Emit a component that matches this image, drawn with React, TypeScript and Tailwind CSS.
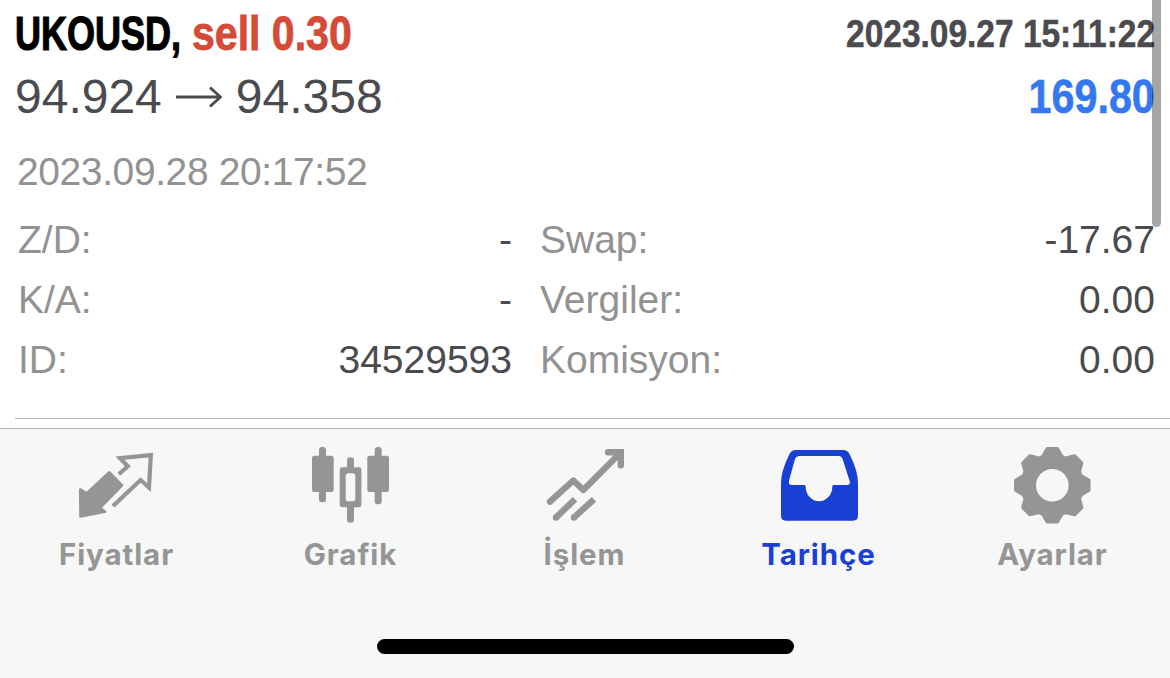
import type { ReactNode } from "react";
import clsx from "clsx";

const details = [
  { label: "Z/D:", value: "-", label2: "Swap:", value2: "-17.67" },
  { label: "K/A:", value: "-", label2: "Vergiler:", value2: "0.00" },
  { label: "ID:", value: "34529593", label2: "Komisyon:", value2: "0.00" },
];

function QuotesIcon() {
  return (
    <>
      <path
        d="M8.2 49.5 14.8 53.3 37.4 32.3 50 45.3 28.3 67.7 33 71.8 8.5 76.5Z"
        fill="currentColor"
        stroke="currentColor"
        strokeWidth="2.6"
        strokeLinejoin="round"
      />
      <path
        d="M46.8 34.3 55.8 26.2 48 18.2 78.8 15.2 77 47.5 68.6 40 41 66"
        fill="none"
        stroke="currentColor"
        strokeWidth="4.2"
      />
    </>
  );
}

function ChartIcon() {
  return (
    <g fill="currentColor">
      <rect x="13" y="7" width="7" height="55.3" rx="3" />
      <rect x="6" y="15.7" width="21.7" height="36.3" rx="2.5" />
      <rect x="41" y="17.3" width="7" height="20" rx="3" />
      <rect x="41" y="60" width="7" height="22.7" rx="3" />
      <rect x="33.7" y="27.3" width="21.7" height="40" rx="2.5" />
      <rect x="39.7" y="33.3" width="9.6" height="28" rx="2.5" fill="#f7f7f7" />
      <rect x="68.7" y="7" width="7" height="57.3" rx="3" />
      <rect x="61.3" y="15.7" width="21.7" height="36.3" rx="2.5" />
    </g>
  );
}

function TradeIcon() {
  return (
    <g fill="none" stroke="currentColor" strokeWidth="6.4">
      <path d="M10 61.7 33.3 40.5 43.3 50 80 13.3" strokeLinecap="round" strokeLinejoin="round" />
      <path d="M68 12.3H80.8V25.2" strokeLinecap="round" />
      <path d="M16 77.5 35 59.3M34 77.5 54 59.3" />
      <path d="M16 77.5h.01M34 77.5h.01" strokeLinecap="round" />
    </g>
  );
}

function HistoryIcon() {
  return (
    <path
      fillRule="evenodd"
      fill="currentColor"
      d="M22 10H69Q73.5 10 75.5 14Q84 31 84 43V75.5Q84 80.7 79 80.7H12Q7 80.7 7 75.5V43Q7 31 15.5 14Q17.5 10 22 10ZM25.5 16Q22.3 16 21 19L15.2 40Q14 45 17.5 45H30.5Q31.7 45 31.7 47A13.3 14.3 0 0 0 58.3 47Q58.3 45 59.5 45H73Q77 45 75.5 40.5L68.6 19Q67.5 16 64.5 16Z"
    />
  );
}

// [angle from the tooth centre, radius]
const tooth = [
  [-17.5, 31.2],
  [-12, 34.5],
  [-8, 37.3],
  [8, 37.3],
  [12, 34.5],
  [17.5, 31.2],
  [22.5, 30.4],
];

const gearPoints = Array.from({ length: 8 }, (_, i) =>
  tooth.map(([angle, r]) => {
    const a = ((i * 45 + angle) * Math.PI) / 180;
    return `${(44.3 + r * Math.sin(a)).toFixed(2)},${(45.3 - r * Math.cos(a)).toFixed(2)}`;
  }).join(" ")
).join(" ");

function SettingsIcon() {
  return (
    <>
      <polygon
        points={gearPoints}
        fill="currentColor"
        stroke="currentColor"
        strokeWidth="2.6"
        strokeLinejoin="round"
      />
      <circle cx="44.3" cy="45.3" r="16.3" fill="#f7f7f7" />
    </>
  );
}

const tabs: { label: string; icon: ReactNode; active?: boolean }[] = [
  { label: "Fiyatlar", icon: <QuotesIcon /> },
  { label: "Grafik", icon: <ChartIcon /> },
  { label: "İşlem", icon: <TradeIcon /> },
  { label: "Tarihçe", icon: <HistoryIcon />, active: true },
  { label: "Ayarlar", icon: <SettingsIcon /> },
];

export default function App() {
  return (
    <div className="relative flex h-[678px] w-[1170px] flex-col overflow-hidden bg-white font-['Liberation_Sans',sans-serif] text-[39px] leading-none text-[#4a4a4f]">
      <main className="h-[428px] pl-[15px]">
        <div className="flex h-[66px] items-center justify-between pr-[15px] font-bold">
          <div className="flex pt-[2px] text-[48px]">
            <span className="w-[177px] origin-left scale-x-[0.75] whitespace-nowrap text-black [-webkit-text-stroke:1.2px_#000]">
              UKOUSD,
            </span>
            <span className="origin-left scale-x-[0.855] whitespace-nowrap text-[#d54b37] [-webkit-text-stroke:0.8px_#d54b37]">
              sell 0.30
            </span>
          </div>
          <span className="origin-right scale-x-[0.858] whitespace-nowrap [-webkit-text-stroke:0.5px_#4a4a4f]">
            2023.09.27 15:11:22
          </span>
        </div>
        <div className="flex h-[61px] items-center justify-between pr-[15px] text-[48px]">
          <div className="flex items-center">
            <span>94.924</span>
            <svg className="mx-[14px] h-6 w-[46px]" viewBox="0 0 46 24" fill="none" stroke="currentColor" strokeWidth="2.8">
              <path d="M0 12H44.5M34 2.5 44.5 12 34 21.5" />
            </svg>
            <span>94.358</span>
          </div>
          <span className="origin-right scale-x-[0.86] font-bold text-[#3478f0] [-webkit-text-stroke:0.6px_#3478f0]">
            169.80
          </span>
        </div>
        <div className="flex h-[82px] items-center pt-[7px] pl-[2px] tracking-[-0.4px] text-[#929292]">
          2023.09.28 20:17:52
        </div>
        <div>
          {details.map((row) => (
            <div key={row.label} className="flex h-[60px] items-center pr-[15px]">
              <div className="flex w-[497px] justify-between pl-[3px]">
                <span className="text-[#929292]">{row.label}</span>
                <span>{row.value}</span>
              </div>
              <div className="flex flex-1 justify-between pl-[28px]">
                <span className="text-[#929292]">{row.label2}</span>
                <span>{row.value2}</span>
              </div>
            </div>
          ))}
        </div>
        <div className="mt-[29px] h-px bg-[#b5b5b5]" />
      </main>
      <nav className="flex h-[250px] flex-col items-center border-t border-[#b0b0b0] bg-[#f7f7f7]">
        <div className="grid w-full grid-cols-5 pt-[11px]">
          {tabs.map((tab) => (
            <div
              key={tab.label}
              className={clsx(
                "flex flex-col items-center font-['Inter',sans-serif] text-[29.5px] leading-[36px] font-bold tracking-[0.9px]",
                tab.active ? "text-[#193fd4]" : "text-[#959595]"
              )}
            >
              <svg className="size-[90px]" viewBox="0 0 90 90">
                {tab.icon}
              </svg>
              <span className="mt-[6px] -ml-px">{tab.label}</span>
            </div>
          ))}
        </div>
        <div className="mt-[67px] h-[15px] w-[417px] rounded-full bg-black" />
      </nav>
      <div className="absolute top-0 right-[9px] h-[227px] w-[9px] rounded-b-full bg-black/35" />
    </div>
  );
}
